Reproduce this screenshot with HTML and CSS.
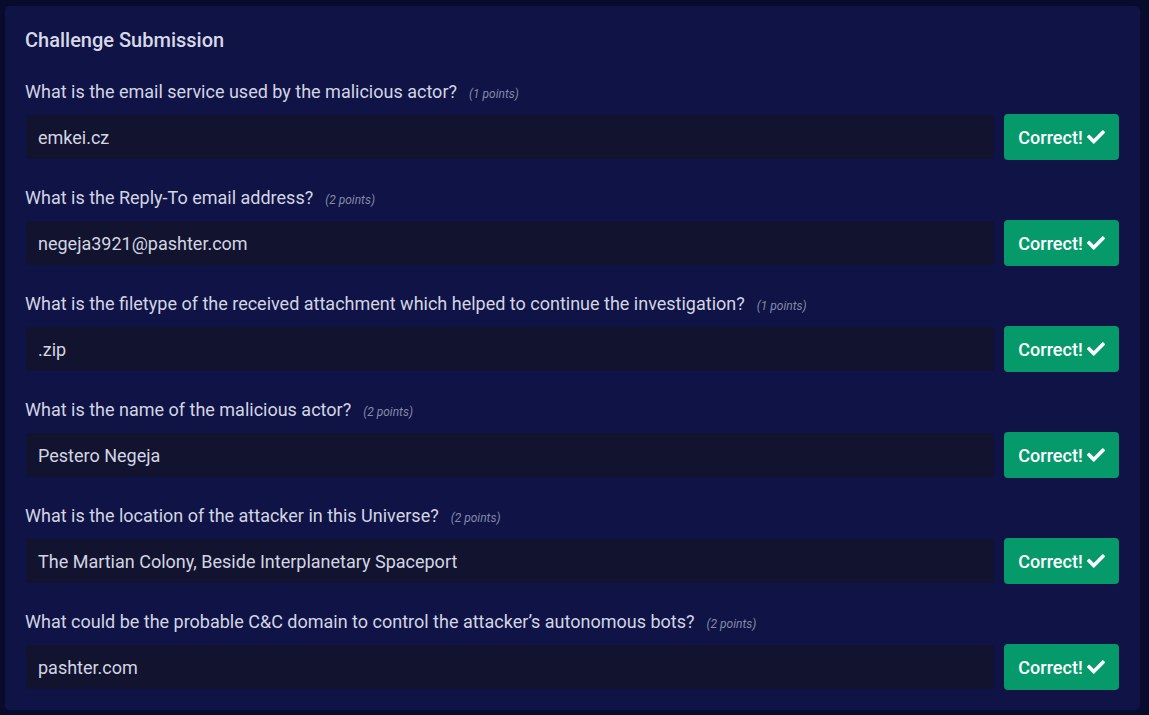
FILE: index.html
```html
<!DOCTYPE html>
<html>
<head>
<meta charset="utf-8">
<link rel="stylesheet" href="styles.css">
</head>
<body>
<div class="card">
  <h2 class="title">Challenge Submission</h2>
  <div class="q">
    <div class="label">What is the email service used by the malicious actor?<span class="pts">(1 points)</span></div>
    <div class="row"><div class="input">emkei.cz</div><button class="btn">Correct! <svg class="chk" viewBox="0 0 512 512"><path d="M173.898 439.404l-166.4-166.4c-9.997-9.997-9.997-26.206 0-36.204l36.203-36.204c9.997-9.998 26.207-9.998 36.204 0L192 312.69 432.095 72.596c9.997-9.997 26.207-9.997 36.204 0l36.203 36.204c9.997 9.997 9.997 26.206 0 36.204l-294.4 294.401c-9.998 9.997-26.207 9.997-36.204-.001z"/></svg></button></div>
  </div>
  <div class="q">
    <div class="label">What is the Reply-To email address?<span class="pts">(2 points)</span></div>
    <div class="row"><div class="input">negeja3921@pashter.com</div><button class="btn">Correct! <svg class="chk" viewBox="0 0 512 512"><path d="M173.898 439.404l-166.4-166.4c-9.997-9.997-9.997-26.206 0-36.204l36.203-36.204c9.997-9.998 26.207-9.998 36.204 0L192 312.69 432.095 72.596c9.997-9.997 26.207-9.997 36.204 0l36.203 36.204c9.997 9.997 9.997 26.206 0 36.204l-294.4 294.401c-9.998 9.997-26.207 9.997-36.204-.001z"/></svg></button></div>
  </div>
  <div class="q">
    <div class="label">What is the filetype of the received attachment which helped to continue the investigation?<span class="pts">(1 points)</span></div>
    <div class="row"><div class="input">.zip</div><button class="btn">Correct! <svg class="chk" viewBox="0 0 512 512"><path d="M173.898 439.404l-166.4-166.4c-9.997-9.997-9.997-26.206 0-36.204l36.203-36.204c9.997-9.998 26.207-9.998 36.204 0L192 312.69 432.095 72.596c9.997-9.997 26.207-9.997 36.204 0l36.203 36.204c9.997 9.997 9.997 26.206 0 36.204l-294.4 294.401c-9.998 9.997-26.207 9.997-36.204-.001z"/></svg></button></div>
  </div>
  <div class="q">
    <div class="label">What is the name of the malicious actor?<span class="pts">(2 points)</span></div>
    <div class="row"><div class="input">Pestero Negeja</div><button class="btn">Correct! <svg class="chk" viewBox="0 0 512 512"><path d="M173.898 439.404l-166.4-166.4c-9.997-9.997-9.997-26.206 0-36.204l36.203-36.204c9.997-9.998 26.207-9.998 36.204 0L192 312.69 432.095 72.596c9.997-9.997 26.207-9.997 36.204 0l36.203 36.204c9.997 9.997 9.997 26.206 0 36.204l-294.4 294.401c-9.998 9.997-26.207 9.997-36.204-.001z"/></svg></button></div>
  </div>
  <div class="q">
    <div class="label">What is the location of the attacker in this Universe?<span class="pts">(2 points)</span></div>
    <div class="row"><div class="input">The Martian Colony, Beside Interplanetary Spaceport</div><button class="btn">Correct! <svg class="chk" viewBox="0 0 512 512"><path d="M173.898 439.404l-166.4-166.4c-9.997-9.997-9.997-26.206 0-36.204l36.203-36.204c9.997-9.998 26.207-9.998 36.204 0L192 312.69 432.095 72.596c9.997-9.997 26.207-9.997 36.204 0l36.203 36.204c9.997 9.997 9.997 26.206 0 36.204l-294.4 294.401c-9.998 9.997-26.207 9.997-36.204-.001z"/></svg></button></div>
  </div>
  <div class="q">
    <div class="label">What could be the probable C&amp;C domain to control the attacker’s autonomous bots?<span class="pts">(2 points)</span></div>
    <div class="row"><div class="input">pashter.com</div><button class="btn">Correct! <svg class="chk" viewBox="0 0 512 512"><path d="M173.898 439.404l-166.4-166.4c-9.997-9.997-9.997-26.206 0-36.204l36.203-36.204c9.997-9.998 26.207-9.998 36.204 0L192 312.69 432.095 72.596c9.997-9.997 26.207-9.997 36.204 0l36.203 36.204c9.997 9.997 9.997 26.206 0 36.204l-294.4 294.401c-9.998 9.997-26.207 9.997-36.204-.001z"/></svg></button></div>
  </div>
</div>
</body>
</html>
```

FILE: styles.css
```css
html, body {
  margin: 0;
  padding: 0;
}
body {
  background: #090b2c;
  font-family: Roboto, "Liberation Sans", sans-serif;
  padding: 6px 9px 5px 5px;
}
.card {
  background: #0f1346;
  border-radius: 5px;
  padding: 20px 21px 20px 20px;
  display: flex;
  flex-direction: column;
  gap: 25px;
}
.title {
  margin: 0;
  font-size: 20px;
  font-weight: 500;
  line-height: 28px;
  color: #d7d9e6;
}
.q {
  display: flex;
  flex-direction: column;
  gap: 10px;
}
.label {
  font-size: 18px;
  line-height: 24px;
  height: 25px;
  padding-top: 1px;
  box-sizing: border-box;
  color: #d3d5e2;
  white-space: nowrap;
}
.pts {
  font-size: 12px;
  font-style: italic;
  color: #858aa6;
  margin-left: 12px;
}
.row {
  display: flex;
  align-items: center;
  gap: 10px;
}
.input {
  flex: 1;
  height: 44px;
  box-sizing: border-box;
  background: #11132f;
  border-radius: 4px;
  padding: 0 12px;
  margin-left: 1px;
  display: flex;
  align-items: center;
  font-size: 18px;
  color: #d3d5e2;
}
.btn {
  width: 115px;
  height: 46px;
  border: none;
  border-radius: 4px;
  background: #069a6b;
  color: #ffffff;
  font-family: Roboto, "Liberation Sans", sans-serif;
  font-size: 18px;
  font-weight: 500;
  display: flex;
  align-items: center;
  justify-content: center;
  gap: 4px;
  padding: 0;
}
.chk {
  width: 18px;
  height: 18px;
  fill: #ffffff;
}
```
